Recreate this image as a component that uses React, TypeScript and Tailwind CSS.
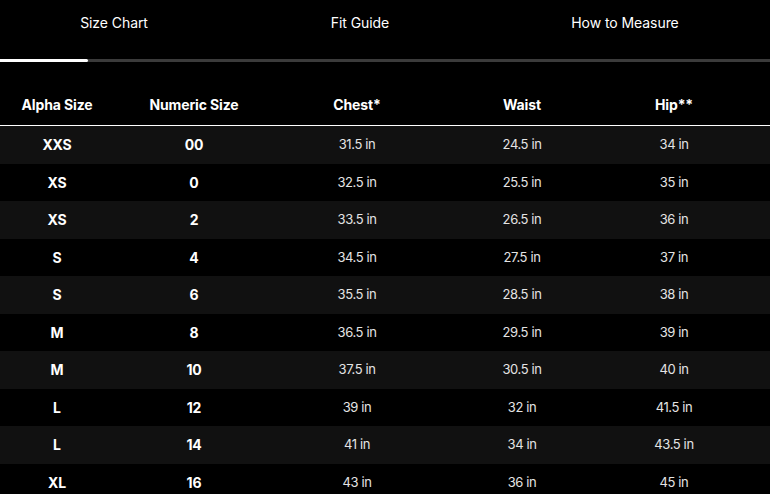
import React from "react";

const rows = [
  ["XXS", "00", "31.5 in", "24.5 in", "34 in"],
  ["XS", "0", "32.5 in", "25.5 in", "35 in"],
  ["XS", "2", "33.5 in", "26.5 in", "36 in"],
  ["S", "4", "34.5 in", "27.5 in", "37 in"],
  ["S", "6", "35.5 in", "28.5 in", "38 in"],
  ["M", "8", "36.5 in", "29.5 in", "39 in"],
  ["M", "10", "37.5 in", "30.5 in", "40 in"],
  ["L", "12", "39 in", "32 in", "41.5 in"],
  ["L", "14", "41 in", "34 in", "43.5 in"],
  ["XL", "16", "43 in", "36 in", "45 in"],
];

const cols = "grid grid-cols-[114px_160px_166px_164px_140px]";

export default function App() {
  return (
    <div
      className="h-[494px] w-[770px] overflow-hidden bg-black text-white"
      style={{ fontFamily: "Inter, 'Liberation Sans', sans-serif" }}
    >
      {/* Tabs */}
      <div className="grid h-[59px] grid-cols-[228px_264px_1fr] text-[14px] tracking-[-0.005em]">
        <button className="pb-[15px] text-center">Size Chart</button>
        <button className="pb-[15px] text-center">Fit Guide</button>
        <button className="pb-[15px] pr-[12px] text-center">How to Measure</button>
      </div>
      <div className="flex h-[3px] bg-[#3b3b3b]">
        <div className="w-[88px] rounded-r-full bg-white" />
      </div>

      {/* Table header */}
      <div className={`${cols} h-[64px] items-end border-b border-white pb-[10px] text-[14px] font-bold tracking-[-0.01em]`}>
        <div className="text-center">Alpha Size</div>
        <div className="text-center">Numeric Size</div>
        <div className="text-center">Chest*</div>
        <div className="text-center">Waist</div>
        <div className="text-center">Hip**</div>
      </div>

      {/* Rows */}
      {rows.map((r, i) => (
        <div
          key={i}
          className={`${cols} h-[37.5px] items-center text-[13px] tracking-[-0.03em] ${
            i % 2 === 0 ? "bg-[#111111]" : "bg-black"
          }`}
        >
          <div className="text-center text-[14px] font-bold tracking-[-0.01em]">{r[0]}</div>
          <div className="text-center text-[14px] font-bold tracking-[-0.01em]">{r[1]}</div>
          <div className="text-center text-[#e4e4e4]">{r[2]}</div>
          <div className="text-center text-[#e4e4e4]">{r[3]}</div>
          <div className="text-center text-[#e4e4e4]">{r[4]}</div>
        </div>
      ))}
    </div>
  );
}
